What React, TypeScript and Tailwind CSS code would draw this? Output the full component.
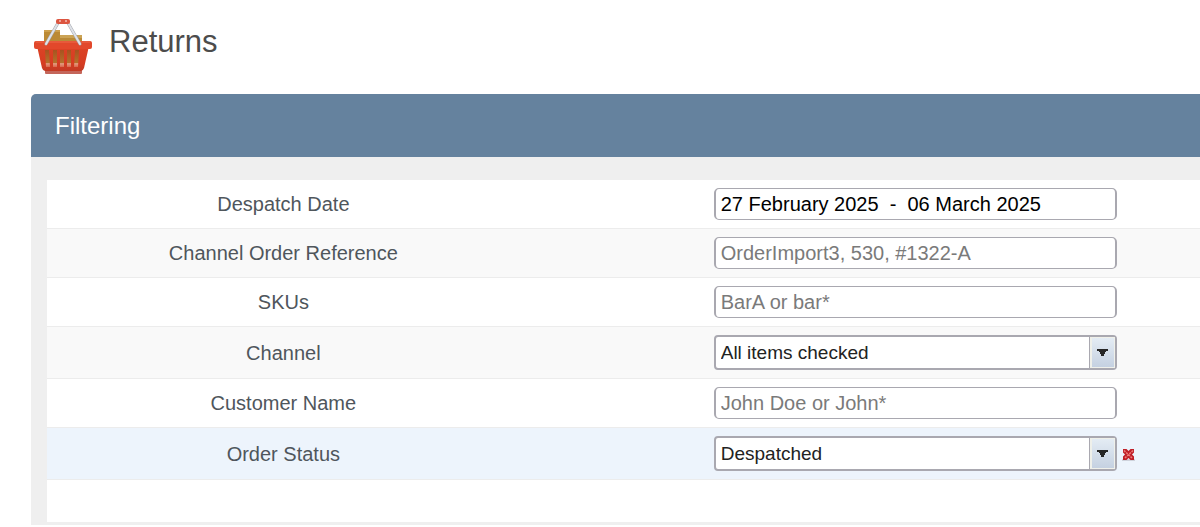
import { useState } from 'react';

type Field = {
  id: string;
  label: string;
  kind: 'text' | 'select';
  value?: string;
  placeholder?: string;
  options?: string[];
  clearable?: boolean;
};

const fields: Field[] = [
  { id: 'despatch-date', label: 'Despatch Date', kind: 'text', value: '27 February 2025  -  06 March 2025' },
  { id: 'order-ref', label: 'Channel Order Reference', kind: 'text', placeholder: 'OrderImport3, 530, #1322-A' },
  { id: 'skus', label: 'SKUs', kind: 'text', placeholder: 'BarA or bar*' },
  { id: 'channel', label: 'Channel', kind: 'select', options: ['All items checked'] },
  { id: 'customer', label: 'Customer Name', kind: 'text', placeholder: 'John Doe or John*' },
  { id: 'status', label: 'Order Status', kind: 'select', options: ['Despatched'], clearable: true },
];

function BasketIcon() {
  return (
    <svg width="60" height="58" viewBox="0 0 60 58" aria-hidden="true">
      <defs>
        <linearGradient id="basket" x1="0" y1="0" x2="0" y2="1">
          <stop offset="0" stopColor="#dc4325" />
          <stop offset="0.7" stopColor="#d63c22" />
          <stop offset="1" stopColor="#c23a24" />
        </linearGradient>
        <linearGradient id="slat" x1="0" y1="0" x2="0" y2="1">
          <stop offset="0" stopColor="#a8521f" />
          <stop offset="0.75" stopColor="#b5702c" />
          <stop offset="0.8" stopColor="#e39a80" />
          <stop offset="1" stopColor="#d9674c" />
        </linearGradient>
      </defs>
      <path d="M11 12h16v14H11z" fill="#bb8a35" />
      <path d="M11 12h16v2H11z" fill="#cda04d" />
      <path d="M27 17h22v9H27z" fill="#b98a38" />
      <path d="M27 17h22v3H27z" fill="#cba355" />
      <path d="M12 51h37v4q0 1-1 1H13q-1 0-1-1z" fill="#c4665a" />
      <path d="M4 28h52l-5 22q-1 3-3 3H12q-2 0-3-3z" fill="url(#basket)" />
      <path
        d="M12 32h4l1 17h-4zM20 32h4v17h-4zM27 32h4v17h-4zM34 32h4v17h-4zM42 32h4l-1 17h-4z"
        fill="url(#slat)"
      />
      <rect x="1" y="23" width="58" height="8" rx="2" fill="#e2482b" />
      <path d="M3 24h54" stroke="#ec6b4c" />
      <path d="M25 5L13 26M35 5l12 21" stroke="#a4a7ad" strokeWidth="3" fill="none" strokeLinecap="round" />
      <path d="M25 5L13 26M35 5l12 21" stroke="#dfe2e8" strokeWidth="2" fill="none" strokeLinecap="round" />
      <rect x="23" y="1" width="14" height="5" rx="2" fill="#dc5540" />
      <path d="M26 3h2M32 3h2" stroke="#eea194" strokeWidth="2" />
    </svg>
  );
}

function ClearIcon() {
  return (
    <svg width="13" height="12" viewBox="0 0 13 12" aria-hidden="true">
      <path d="M0 10h13v2H0z" fill="#cfd3dc" />
      <path d="M1 0h3.500l2 2 2-2H12v3.500L10 5.500l2 2V11H8.500l-2-2-2 2H1V7.500l2-2-2-2z" fill="#bf1f27" />
      <path d="M2 1.500l8.500 8M11 1.500l-8.500 8" stroke="#ee7b78" strokeWidth="1.500" strokeDasharray="2 1" />
    </svg>
  );
}

function TextField({ field }: { field: Field }) {
  const [value, setValue] = useState(field.value ?? '');

  return (
    <input
      id={field.id}
      type="text"
      value={value}
      placeholder={field.placeholder}
      onChange={(e) => setValue(e.target.value)}
      className="block h-8 w-[403px] rounded-[5px] border-x-2 border-y border-[#a9a8b0] bg-white px-[5px] text-xl leading-6 text-black outline-none placeholder:text-[#7a7a7a]"
    />
  );
}

function SelectField({ field }: { field: Field }) {
  return (
    <div className="relative h-[35px] w-[403px]">
      <select
        id={field.id}
        className="block h-full w-full appearance-none rounded-[4px] border-2 border-[#a9a8b0] bg-white pr-8 pl-[5px] text-[19px] leading-6 text-[#222] outline-none"
      >
        {field.options?.map((option) => (
          <option key={option}>{option}</option>
        ))}
      </select>
      <span className="pointer-events-none absolute inset-y-[2px] right-[2px] flex w-[26px] border-l border-[#a9a8b0] bg-[#eff0ea] py-px pr-px pl-[2px]">
        <span className="flex flex-1 items-center justify-center bg-linear-to-b from-[#e4ecf4] to-[#c5d1e1]">
          <svg width="11" height="7" viewBox="0 0 11 7" aria-hidden="true">
            <path d="M0 0h11v2H9v1H8v2H7v2H4V5H3V3H2V2H0z" fill="#262626" />
          </svg>
        </span>
      </span>
    </div>
  );
}

function rowColor(field: Field, index: number) {
  if (field.clearable) return 'bg-[#edf4fc]';
  return index % 2 ? 'bg-[#f9f9f9]' : 'bg-white';
}

export default function App() {
  return (
    <main className="overflow-hidden bg-white pt-[18px] pl-[31px] font-['Liberation_Sans',Arial,sans-serif]">
      <header className="flex h-[76px] items-start gap-4 pl-[2px]">
        <BasketIcon />
        <h1 className="pt-1 text-[31px] leading-10 text-[#4c4c4c]">Returns</h1>
      </header>

      <section className="rounded-tl-[5px] bg-[#efefef] pb-[3px]">
        <h2 className="rounded-tl-[5px] bg-[#65829e] px-6 py-4 text-2xl leading-[31px] text-white">
          Filtering
        </h2>
        <form className="pt-[23px] pl-4" onSubmit={(e) => e.preventDefault()}>
          {fields.map((field, i) => (
            <div
              key={field.id}
              className={`grid grid-cols-[41fr_59fr] items-center border-b border-[#ececec] py-2 ${rowColor(field, i)}`}
            >
              <label htmlFor={field.id} className="text-center text-xl leading-6 text-[#4f565c]">
                {field.label}
              </label>
              <div className="flex items-center gap-[5px] pl-[194px]">
                {field.kind === 'text' ? <TextField field={field} /> : <SelectField field={field} />}
                {field.clearable && (
                  <button type="button" aria-label={`Clear ${field.label}`} className="shrink-0 pt-[3px]">
                    <ClearIcon />
                  </button>
                )}
              </div>
            </div>
          ))}
          <div className="h-[42px] bg-white" />
        </form>
      </section>
    </main>
  );
}
